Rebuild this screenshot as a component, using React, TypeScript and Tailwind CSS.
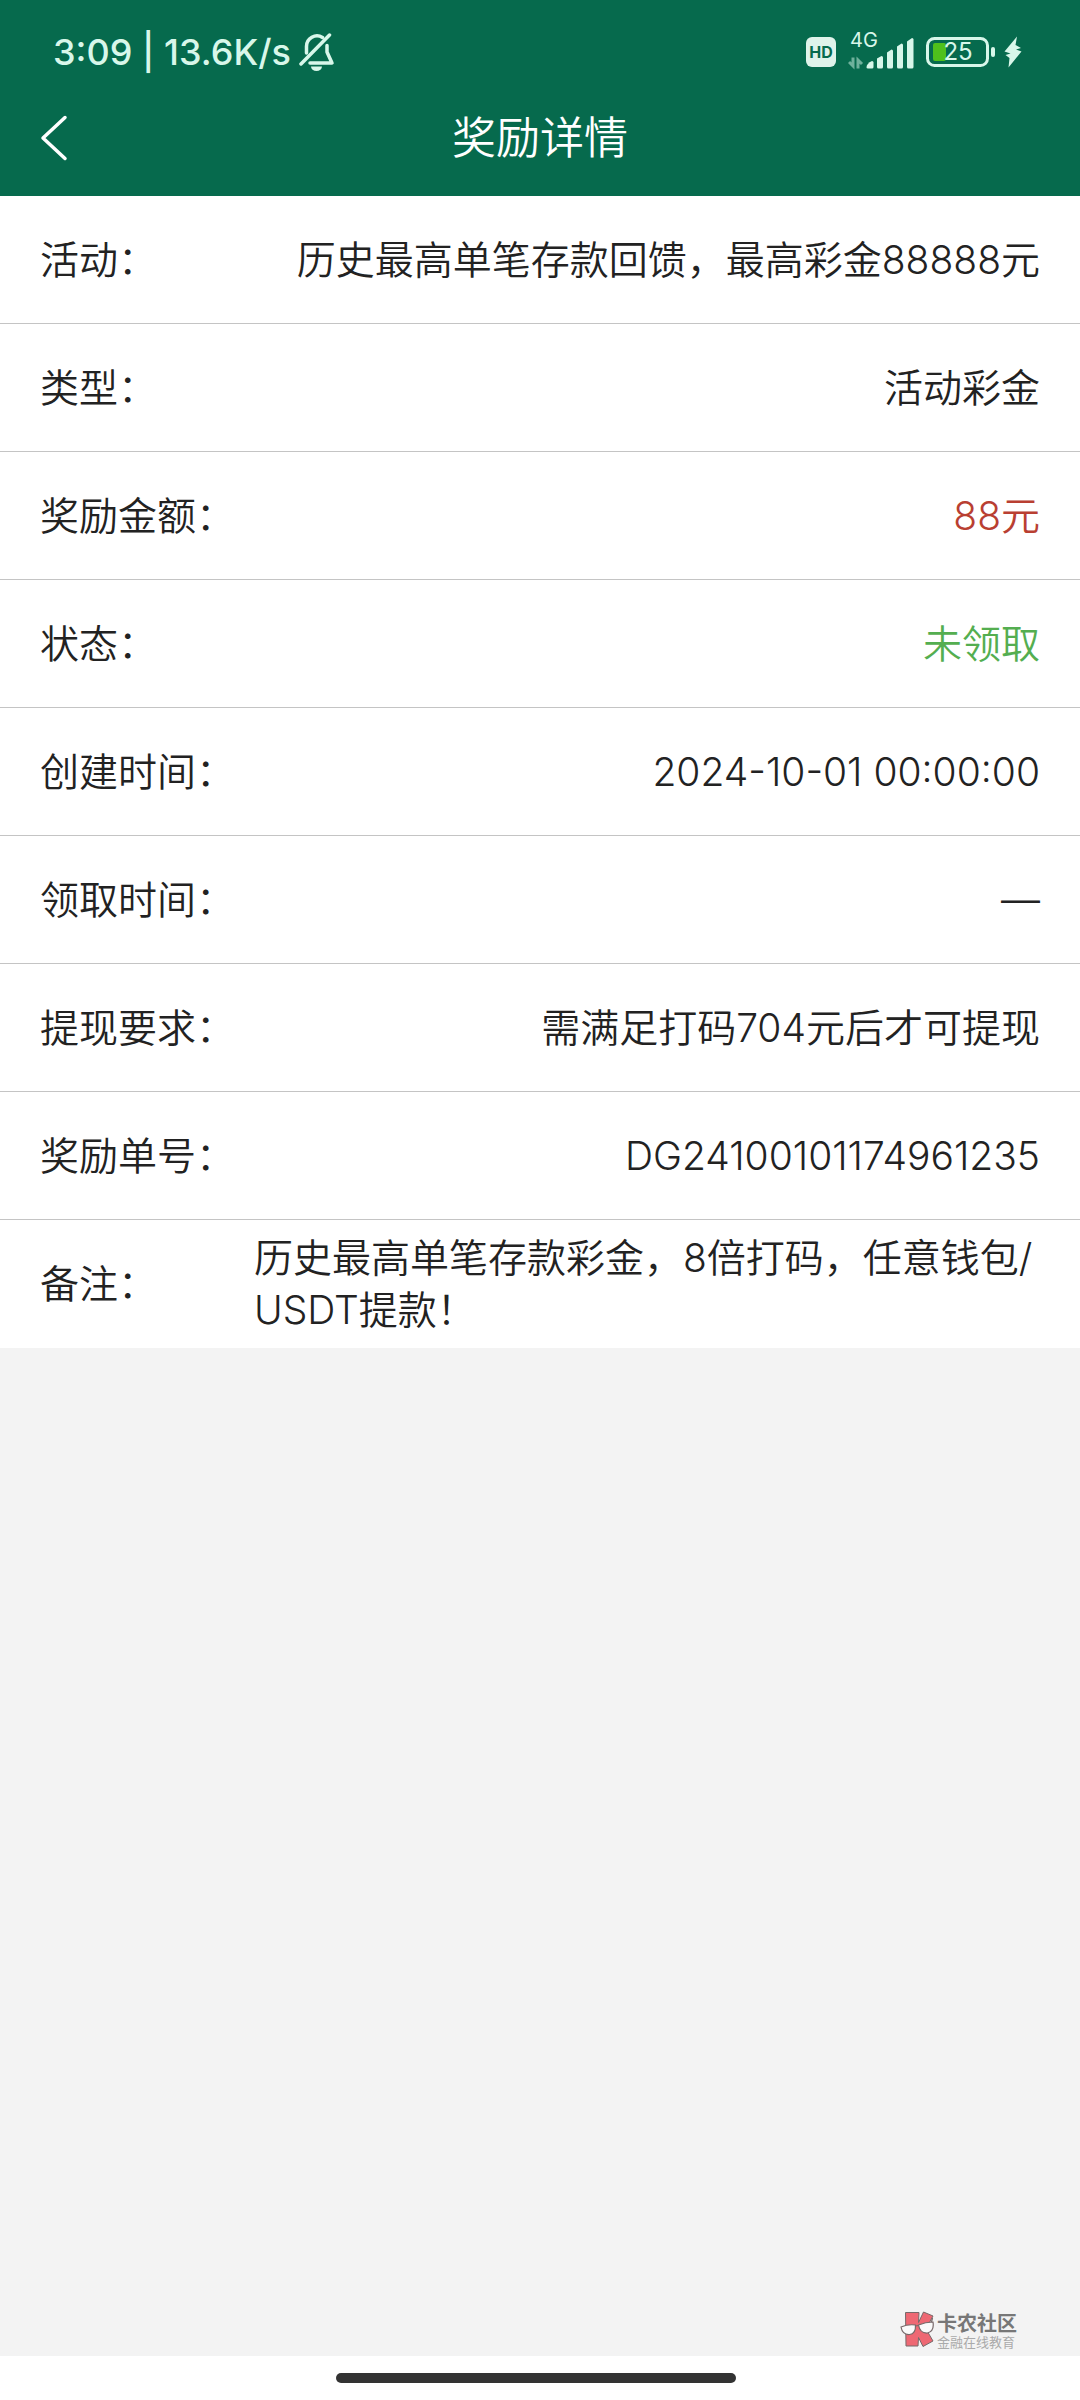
import type { ReactNode } from "react";

type Row = {
  label: string;
  value: ReactNode;
  tone?: "red" | "green";
  align?: "left";
};

const rows: Row[] = [
  { label: "活动：", value: "历史最高单笔存款回馈，最高彩金88888元" },
  { label: "类型：", value: "活动彩金" },
  { label: "奖励金额：", value: "88元", tone: "red" },
  { label: "状态：", value: "未领取", tone: "green" },
  { label: "创建时间：", value: "2024-10-01 00:00:00" },
  { label: "领取时间：", value: "—" },
  { label: "提现要求：", value: "需满足打码704元后才可提现" },
  { label: "奖励单号：", value: "DG24100101174961235" },
  {
    label: "备注：",
    value: (
      <>
        历史最高单笔存款彩金，8倍打码，任意钱包/
        <wbr />
        USDT提款！
      </>
    ),
    align: "left",
  },
];

const tones = {
  red: "text-[#b93f32]",
  green: "text-[#54ae50]",
};

function MutedBell() {
  return (
    <svg className="w-9 h-[38px]" viewBox="0 0 36 38" fill="none">
      <g stroke="currentColor" strokeWidth="3.5" strokeLinecap="round" strokeLinejoin="round">
        <path d="M7.5 20V13.5A10.5 10.5 0 0 1 23.5 4.5" />
        <path d="M2 31L30.5 2" />
        <path d="M28 12.5V19L33 30H11" />
      </g>
      <path d="M12 33.5h11a5.5 4.5 0 0 1-11 0z" fill="currentColor" />
    </svg>
  );
}

function Signal() {
  return (
    <div className="relative">
      <svg className="w-[66px] h-9" viewBox="0 0 66 36" fill="currentColor">
        <g opacity="0.5" fill="none" stroke="currentColor" strokeWidth="3">
          <path d="M5 23.5V32L1 28" />
          <path d="M10 34.5V26L14 30" />
        </g>
        <path d="M18.5 33.5q0-4 5.5-6.5 1.5 0 1.5 1.5V33q0 1.5-1.5 1.5h-4q-1.5 0-1.5-1z" />
        <path d="M29 24.5l4.5-2.5q1.5 0 1.5 1.5V33q0 1.5-1.5 1.5h-3Q29 34.5 29 33z" />
        <path d="M39 18.5l4.5-3q1.5 0 1.5 1.5v16q0 1.5-1.5 1.5h-3Q39 34.5 39 33z" />
        <path d="M49 12.5l4.5-3q1.5 0 1.5 1.5v22q0 1.5-1.5 1.5h-3Q49 34.5 49 33z" />
        <path d="M59 7.5l5-3.500q1.5 0 1.5 1.5V33q0 1.5-1.5 1.5h-3.5Q59 34.5 59 33z" />
      </svg>
      <span className="absolute left-0.5 -top-1.5 text-[20px] leading-6">4G</span>
    </div>
  );
}

function Battery() {
  return (
    <div className="relative">
      <svg className="w-[70px] h-[30px]" viewBox="0 0 70 30" fill="none">
        <rect x="1.5" y="1.5" width="60" height="27" rx="7" stroke="currentColor" strokeWidth="3" />
        <rect x="7" y="6" width="13" height="18" rx="2" fill="#4fc01c" />
        <rect x="65" y="10" width="4" height="10" rx="2" fill="currentColor" />
      </svg>
      <span className="absolute left-0 top-0 w-16 text-center text-[24px] leading-[30px]">
        25
      </span>
    </div>
  );
}

function StatusBar() {
  return (
    <div className="h-[76px] pt-7 pl-[53px] pr-[58px] flex items-center justify-between text-[#d8f7ea]">
      <div className="flex items-center gap-2 text-[36px] leading-12 font-medium">
        <span>3:09 | 13.6K/s</span>
        <MutedBell />
      </div>
      <div className="flex items-center gap-3">
        <span className="w-[30px] h-[30px] rounded-md bg-[#dff3ea] text-[#066a4d] text-[16px] leading-[30px] font-bold text-center">
          HD
        </span>
        <Signal />
        <div className="flex items-center gap-2">
          <Battery />
          <svg className="w-[18px] h-8" viewBox="0 0 18 32" fill="currentColor">
            <path d="M13 0.5L0.5 15.5L6.5 17.5L1.5 19L5.5 22L4.5 31.5L17.5 15.5L12 13.5L17 12L11.5 9z" />
          </svg>
        </div>
      </div>
    </div>
  );
}

function Watermark() {
  return (
    <div className="mt-auto ml-auto mr-[63px] mb-2 flex items-center gap-0.5">
      <svg className="w-[35px] h-[37px]" viewBox="0 0 35 37">
        <path
          d="M5.5 1.5H19l-.5 10L23.5 1 33 5l-7 13 7 12-10 5.5-4.5-9-.5 8.5H6z"
          fill="#ee6873"
          stroke="#77696a"
          strokeWidth="1"
        />
        <g fill="#fafafa" stroke="#77696a" strokeWidth="1.2">
          <path d="M1 16q7-3 14.5-2 .5 9-6 9.5Q2.5 24 1 16z" />
          <path d="M18.5 14q7-3 14.5-3 1.5 9-5.5 11-7.5.5-9-8z" />
          <path d="M15.5 15l3-.5M31.5 11l1-4" fill="none" />
        </g>
      </svg>
      <div className="flex flex-col">
        <span className="text-[20px] leading-6 font-bold text-[#777]">卡农社区</span>
        <span className="text-[13px] leading-3 text-[#aaa]">金融在线教育</span>
      </div>
    </div>
  );
}

export default function App() {
  return (
    <div className="min-h-screen flex flex-col bg-[#f3f3f3] text-[#222] font-['Inter','Noto_Sans_CJK_SC',sans-serif]">
      <header className="bg-[#066a4d]">
        <StatusBar />
        <div className="h-[120px] px-10 pt-1 grid grid-cols-[1fr_auto_1fr] items-center text-white">
          <button type="button" aria-label="返回" className="justify-self-start">
            <svg className="w-7 h-[46px]" viewBox="0 0 28 46" fill="none">
              <path
                d="M25 2.5L3 23L25 43.5"
                stroke="currentColor"
                strokeWidth="3.5"
                strokeLinecap="round"
                strokeLinejoin="round"
              />
            </svg>
          </button>
          <h1 className="text-[44px] leading-16 font-[350]">奖励详情</h1>
        </div>
      </header>

      <main className="flex-1 flex flex-col">
        <dl className="bg-white text-[39px] leading-[52px] font-[350] divide-y divide-[#c4c4c4]">
          {rows.map((row) => (
            <div key={row.label} className="min-h-32 px-10 flex items-center">
              <dt className="w-[214px] shrink-0">{row.label}</dt>
              <dd
                className={`flex-1 ${row.align === "left" ? "text-left" : "text-right"} ${
                  row.tone ? tones[row.tone] : ""
                }`}
              >
                {row.value}
              </dd>
            </div>
          ))}
        </dl>
        <Watermark />
      </main>

      <footer className="h-11 pr-2 bg-white flex items-center justify-center">
        <div className="w-[400px] h-2.5 rounded-full bg-[#333]" />
      </footer>
    </div>
  );
}
